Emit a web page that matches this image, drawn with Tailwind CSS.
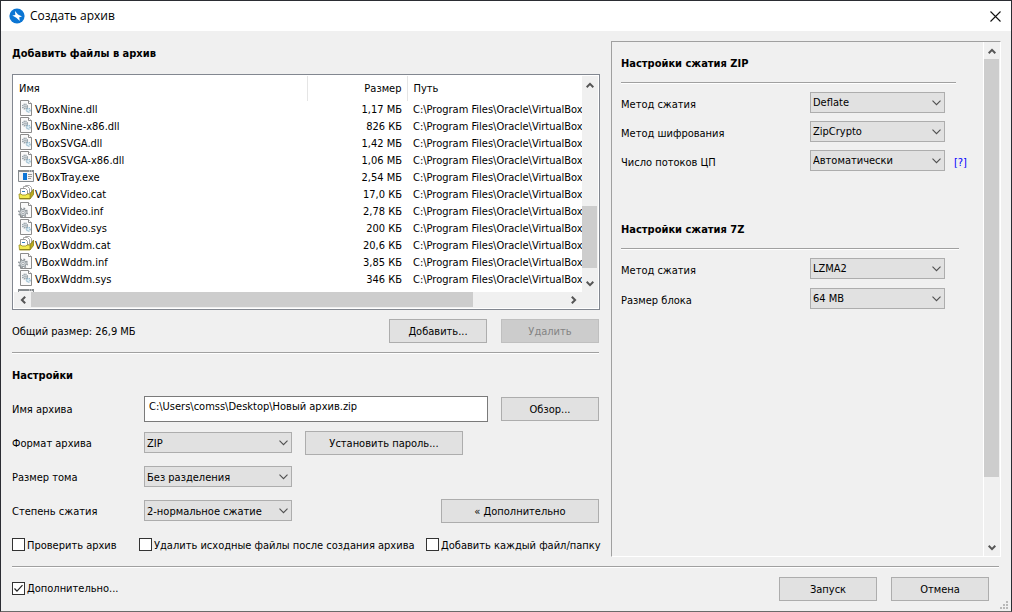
<!DOCTYPE html>
<html lang="ru">
<head>
<meta charset="utf-8">
<title>Создать архив</title>
<script src="https://cdn.jsdelivr.net/npm/@tailwindcss/browser@4"></script>
</head>
<body class="flex min-h-screen flex-col border border-[#2b2d33] border-b-[#6a6a6a] bg-[#f0f0f0] font-['DejaVu_Sans_Condensed','DejaVu_Sans',sans-serif] text-[11px] leading-4 text-black">

<svg class="hidden" xmlns="http://www.w3.org/2000/svg">
  <symbol id="dll" viewBox="0 0 16 16">
    <path d="M2.500.500h8l3 3v12h-11z" fill="#fafafa" stroke="#8c8c8c"/>
    <path d="M10.500.500v3h3" fill="#fff" stroke="#8c8c8c"/>
    <circle cx="7" cy="6.500" r="2.300" fill="#e4e9ec" stroke="#8d989f" stroke-width="1.600" stroke-dasharray="1 .7"/>
    <circle cx="7" cy="6.500" r=".9" fill="#a5adb2"/>
    <circle cx="10.300" cy="10.300" r="1.800" fill="#e2f1f8" stroke="#8fb5c9" stroke-width="1.400" stroke-dasharray="1 .6"/>
  </symbol>
  <symbol id="exe" viewBox="0 0 16 16">
    <path d="M.5 2.500h15v11H.5z" fill="#f3f3f3" stroke="#868b8e"/>
    <path d="M0 2h16v2H0z" fill="#868b8e"/>
    <path d="M11 2.500h1v1h-1zM13 2.500h1v1h-1z" fill="#e8e8e8"/>
    <path d="M5 5h4v7H5z" fill="#0a74d6"/>
    <path d="M10 6.500h4M10 8.500h4M10 10.500h3" stroke="#9a9a9a"/>
  </symbol>
  <symbol id="cat" viewBox="0 0 16 16">
    <path d="M7.500.500h4l2 2v5h-6z" fill="#fff" stroke="#a8a8a8"/>
    <path d="M5.500 1.500h4l2 2v5h-6z" fill="#fff" stroke="#a8a8a8"/>
    <path d="M2.500 3.500h5l2 2v5h-7z" fill="#fff" stroke="#999"/>
    <path d="M4 6.500h3" stroke="#3b83bd"/>
    <path d="M12 9l3.500-5v5.500L12 14z" fill="#b9ab1c" stroke="#857b1a" stroke-width=".8"/>
    <path d="M1 9h2l1 1h4l1-1h3v5H1.500z" fill="#f2ea4e" stroke="#a1972a" stroke-width=".9"/>
    <path d="M2 13.500h10" stroke="#8d8420"/>
  </symbol>
  <symbol id="inf" viewBox="0 0 16 16">
    <path d="M2.500.500h8l3 3v12h-11z" fill="#fafafa" stroke="#8c8c8c"/>
    <path d="M10.500.500v3h3" fill="#fff" stroke="#8c8c8c"/>
    <circle cx="5" cy="10.500" r="4.200" fill="none" stroke="#8d9499" stroke-width="1.600" stroke-dasharray="1.700 1.600"/>
    <circle cx="5" cy="10.500" r="3.200" fill="#d3d8db" stroke="#949b9f"/>
    <circle cx="5" cy="10.500" r="1.200" fill="#fff" stroke="#949b9f" stroke-width=".8"/>
  </symbol>
  <symbol id="chev" viewBox="0 0 9 6"><path d="M.5.700l4 4 4-4" fill="none" stroke="#4f4f4f" stroke-width="1.100"/></symbol>
  <symbol id="up" viewBox="0 0 8 6"><path d="M.7 5.200L4 1.900l3.300 3.300" fill="none" stroke="#555" stroke-width="2"/></symbol>
  <symbol id="down" viewBox="0 0 8 6"><path d="M.7.800L4 4.100 7.300.800" fill="none" stroke="#555" stroke-width="2"/></symbol>
  <symbol id="left" viewBox="0 0 6 8"><path d="M5.200.700L1.900 4l3.300 3.300" fill="none" stroke="#555" stroke-width="2"/></symbol>
  <symbol id="right" viewBox="0 0 6 8"><path d="M.8.700L4.100 4 .8 7.300" fill="none" stroke="#555" stroke-width="2"/></symbol>
</svg>

<header class="flex h-[30px] items-center gap-[5px] bg-white pr-2.5 pl-2 font-['Open_Sans',sans-serif] text-xs">
  <svg class="size-4" viewBox="0 0 16 16"><circle cx="8" cy="8" r="7.600" fill="#0b75d3"/><path d="M6 3L9 6.500 13 8.500 10.200 9.200l.6 3.800L7.300 9.800 3.300 7.600l3-.7z" fill="#fff"/></svg>
  <h1 class="flex-1">Создать архив</h1>
  <button type="button" aria-label="Закрыть"><svg class="size-[11px]" viewBox="0 0 11 11"><path d="M.5.500l10 10M10.500.500l-10 10" stroke="#111" stroke-width="1.100"/></svg></button>
</header>

<main class="grid flex-1 grid-cols-[minmax(0,588fr)_minmax(0,390fr)] gap-[11px] pt-2.5 pr-2.5 pl-[11px]">
  <div class="flex flex-col">
    <h2 class="mt-[5px] font-bold">Добавить файлы в архив</h2>

    <div class="mt-3 grid grid-cols-[minmax(0,1fr)_16px] grid-rows-[216px_16px] border border-[#828790] bg-white p-px">
      <div class="overflow-hidden">
        <table class="w-full table-fixed border-collapse whitespace-nowrap [&_td]:h-[17px] [&_td]:p-0 [&_td]:align-bottom [&_td_svg]:-mt-px [&_th]:h-[25px] [&_th]:p-0 [&_th]:font-normal [&_td:nth-child(1)]:pl-1 [&_td:nth-child(2)]:pr-[5px] [&_td:nth-child(2)]:text-right [&_td:nth-child(3)]:pl-1.5">
          <colgroup><col><col class="w-[100px]"><col class="w-[175px]"></colgroup>
          <thead><tr>
            <th class="border-r border-[#e5e5e5] text-left"><span class="pl-[5px]">Имя</span></th>
            <th class="border-r border-[#e5e5e5] text-right"><span class="pr-[5px]">Размер</span></th>
            <th class="text-left"><span class="pl-1.5">Путь</span></th>
          </tr></thead>
          <tbody>
            <tr><td><div class="flex h-[17px] items-end gap-px"><svg class="size-4 self-start"><use href="#dll"/></svg>VBoxNine.dll</div></td><td>1,17 МБ</td><td>C:\Program Files\Oracle\VirtualBox</td></tr>
            <tr><td><div class="flex h-[17px] items-end gap-px"><svg class="size-4 self-start"><use href="#dll"/></svg>VBoxNine-x86.dll</div></td><td>826 КБ</td><td>C:\Program Files\Oracle\VirtualBox</td></tr>
            <tr><td><div class="flex h-[17px] items-end gap-px"><svg class="size-4 self-start"><use href="#dll"/></svg>VBoxSVGA.dll</div></td><td>1,42 МБ</td><td>C:\Program Files\Oracle\VirtualBox</td></tr>
            <tr><td><div class="flex h-[17px] items-end gap-px"><svg class="size-4 self-start"><use href="#dll"/></svg>VBoxSVGA-x86.dll</div></td><td>1,06 МБ</td><td>C:\Program Files\Oracle\VirtualBox</td></tr>
            <tr><td><div class="flex h-[17px] items-end gap-px"><svg class="size-4 self-start"><use href="#exe"/></svg>VBoxTray.exe</div></td><td>2,54 МБ</td><td>C:\Program Files\Oracle\VirtualBox</td></tr>
            <tr><td><div class="flex h-[17px] items-end gap-px"><svg class="size-4 self-start"><use href="#cat"/></svg>VBoxVideo.cat</div></td><td>17,0 КБ</td><td>C:\Program Files\Oracle\VirtualBox</td></tr>
            <tr><td><div class="flex h-[17px] items-end gap-px"><svg class="size-4 self-start"><use href="#inf"/></svg>VBoxVideo.inf</div></td><td>2,78 КБ</td><td>C:\Program Files\Oracle\VirtualBox</td></tr>
            <tr><td><div class="flex h-[17px] items-end gap-px"><svg class="size-4 self-start"><use href="#dll"/></svg>VBoxVideo.sys</div></td><td>200 КБ</td><td>C:\Program Files\Oracle\VirtualBox</td></tr>
            <tr><td><div class="flex h-[17px] items-end gap-px"><svg class="size-4 self-start"><use href="#cat"/></svg>VBoxWddm.cat</div></td><td>20,6 КБ</td><td>C:\Program Files\Oracle\VirtualBox</td></tr>
            <tr><td><div class="flex h-[17px] items-end gap-px"><svg class="size-4 self-start"><use href="#inf"/></svg>VBoxWddm.inf</div></td><td>3,85 КБ</td><td>C:\Program Files\Oracle\VirtualBox</td></tr>
            <tr><td><div class="flex h-[17px] items-end gap-px"><svg class="size-4 self-start"><use href="#dll"/></svg>VBoxWddm.sys</div></td><td>346 КБ</td><td>C:\Program Files\Oracle\VirtualBox</td></tr>
            <tr><td><div class="flex h-[17px]"><svg class="size-4"><use href="#exe"/></svg></div></td><td></td><td></td></tr>
          </tbody>
        </table>
      </div>
      <div class="flex flex-col items-center bg-[#f0f0f0]">
        <div class="flex h-[17px] items-center"><svg class="h-1.5 w-2"><use href="#up"/></svg></div>
        <div class="flex w-full flex-1 flex-col pr-px"><div class="flex-[113]"></div><div class="flex-[62] bg-[#cdcdcd]"></div><div class="flex-[7]"></div></div>
        <div class="flex h-[17px] items-center"><svg class="h-1.5 w-2"><use href="#down"/></svg></div>
      </div>
      <div class="flex items-center bg-[#f0f0f0]">
        <div class="flex w-[17px] justify-center"><svg class="h-2 w-1.5"><use href="#left"/></svg></div>
        <div class="flex h-full flex-1 pb-px"><div class="flex-[442] bg-[#cdcdcd]"></div><div class="flex-[92]"></div></div>
        <div class="flex w-[17px] justify-center"><svg class="h-2 w-1.5"><use href="#right"/></svg></div>
      </div>
      <div class="bg-[#f0f0f0]"></div>
    </div>

    <div class="mt-[9px] mr-px flex h-6 items-center gap-3.5">
      <p class="flex-1 pt-0.5">Общий размер: 26,9 МБ</p>
      <button type="button" class="h-6 w-[98px] border border-[#adadad] bg-[#e1e1e1] pt-0.5">Добавить...</button>
      <button type="button" disabled class="h-6 w-[98px] border border-[#bfbfbf] bg-[#cccccc] pt-0.5 text-[#838383]">Удалить</button>
    </div>
    <hr class="mt-[9px] mr-px h-0.5 border-t border-b border-t-[#a0a0a0] border-b-white">

    <h2 class="mt-3.5 font-bold">Настройки</h2>

    <div class="mt-2 mr-px grid auto-rows-[34px] grid-cols-[132px_minmax(0,1fr)] items-center">
      <label for="name" class="pt-0.5">Имя архива</label>
      <div class="flex items-center gap-[13px]">
        <input id="name" type="text" value="C:\Users\comss\Desktop\Новый архив.zip" class="h-[26px] min-w-0 flex-1 border border-[#7a7a7a] bg-white pb-1.5 pl-1">
        <button type="button" class="h-6 w-[98px] border border-[#adadad] bg-[#e1e1e1] pt-0.5">Обзор...</button>
      </div>
      <label for="format" class="pt-0.5">Формат архива</label>
      <div class="flex items-center gap-[13px]">
        <div class="relative mb-px w-[148px]"><select id="format" class="block h-[21px] w-full appearance-none border border-[#adadad] bg-[#e1e1e1] pt-[3px] pl-0.5"><option>ZIP</option></select><svg class="pointer-events-none absolute top-2 right-1 h-1.5 w-[9px]"><use href="#chev"/></svg></div>
        <button type="button" class="h-6 w-[158px] border border-[#adadad] bg-[#e1e1e1] pt-0.5">Установить пароль...</button>
      </div>
      <label for="volume" class="pt-0.5">Размер тома</label>
      <div class="relative mb-px w-[148px]"><select id="volume" class="block h-[21px] w-full appearance-none border border-[#adadad] bg-[#e1e1e1] pt-[3px] pl-0.5"><option>Без разделения</option></select><svg class="pointer-events-none absolute top-2 right-1 h-1.5 w-[9px]"><use href="#chev"/></svg></div>
      <label for="level" class="pt-0.5">Степень сжатия</label>
      <div class="flex items-center justify-between">
        <div class="relative mb-px w-[148px]"><select id="level" class="block h-[21px] w-full appearance-none border border-[#adadad] bg-[#e1e1e1] pt-[3px] pl-0.5"><option>2-нормальное сжатие</option></select><svg class="pointer-events-none absolute top-2 right-1 h-1.5 w-[9px]"><use href="#chev"/></svg></div>
        <button type="button" class="h-6 w-[158px] border border-[#adadad] bg-[#e1e1e1] pt-0.5">« Дополнительно</button>
      </div>
    </div>

    <div class="mt-2 grid grid-cols-[127px_minmax(0,1fr)_174px] leading-5 whitespace-nowrap">
      <label class="flex items-start gap-0.5"><input type="checkbox" class="mt-0.5 size-[13px] shrink-0 appearance-none border border-[#333] bg-white">Проверить архив</label>
      <label class="flex items-start gap-0.5"><input type="checkbox" class="mt-0.5 size-[13px] shrink-0 appearance-none border border-[#333] bg-white">Удалить исходные файлы после создания архива</label>
      <label class="flex items-start gap-0.5"><input type="checkbox" class="mt-0.5 size-[13px] shrink-0 appearance-none border border-[#333] bg-white">Добавить каждый файл/папку</label>
    </div>
  </div>

  <section class="grid grid-cols-[minmax(0,1fr)_17px] border border-t-[#a0a0a0] border-r-white border-b-white border-l-[#a0a0a0]">
    <div class="pt-3.5 pr-6 pl-[9px]">
      <h2 class="font-bold">Настройки сжатия ZIP</h2>
      <hr class="mt-2.5 mr-[3px] h-0.5 border-t border-b border-t-[#a0a0a0] border-b-white">
      <div class="mt-2 grid grid-cols-[189px_135px_1fr] items-center gap-y-2">
        <label for="zm" class="pt-1">Метод сжатия</label>
        <div class="relative"><select id="zm" class="block h-[21px] w-full appearance-none border border-[#adadad] bg-[#e1e1e1] pt-px pl-0.5"><option>Deflate</option></select><svg class="pointer-events-none absolute top-2 right-1 h-1.5 w-[9px]"><use href="#chev"/></svg></div>
        <span></span>
        <label for="ze" class="pt-1">Метод шифрования</label>
        <div class="relative"><select id="ze" class="block h-[21px] w-full appearance-none border border-[#adadad] bg-[#e1e1e1] pt-px pl-0.5"><option>ZipCrypto</option></select><svg class="pointer-events-none absolute top-2 right-1 h-1.5 w-[9px]"><use href="#chev"/></svg></div>
        <span></span>
        <label for="zt" class="pt-1">Число потоков ЦП</label>
        <div class="relative"><select id="zt" class="block h-[21px] w-full appearance-none border border-[#adadad] bg-[#e1e1e1] pt-px pl-0.5"><option>Автоматически</option></select><svg class="pointer-events-none absolute top-2 right-1 h-1.5 w-[9px]"><use href="#chev"/></svg></div>
        <a href="#" class="pt-1 pl-[9px] text-[#0000ff]">[?]</a>
      </div>
      <h2 class="mt-[51px] font-bold">Настройки сжатия 7Z</h2>
      <hr class="mt-2.5 h-0.5 border-t border-b border-t-[#a0a0a0] border-b-white">
      <div class="mt-2 grid grid-cols-[189px_135px] items-center gap-y-[9px]">
        <label for="sm" class="pt-1">Метод сжатия</label>
        <div class="relative"><select id="sm" class="block h-[21px] w-full appearance-none border border-[#adadad] bg-[#e1e1e1] pt-px pl-0.5"><option>LZMA2</option></select><svg class="pointer-events-none absolute top-2 right-1 h-1.5 w-[9px]"><use href="#chev"/></svg></div>
        <label for="sb" class="pt-1">Размер блока</label>
        <div class="relative"><select id="sb" class="block h-[21px] w-full appearance-none border border-[#adadad] bg-[#e1e1e1] pt-px pl-0.5"><option>64 MB</option></select><svg class="pointer-events-none absolute top-2 right-1 h-1.5 w-[9px]"><use href="#chev"/></svg></div>
      </div>
    </div>
    <div class="flex flex-col items-center border-l border-white">
      <div class="flex h-[17px] items-center"><svg class="h-1.5 w-2"><use href="#up"/></svg></div>
      <div class="flex w-full flex-1 flex-col pr-px"><div class="flex-[418] bg-[#cdcdcd]"></div><div class="flex-[62]"></div></div>
      <div class="flex h-[17px] items-center"><svg class="h-1.5 w-2"><use href="#down"/></svg></div>
    </div>
  </section>
</main>

<footer class="pt-[9px] pr-[3px] pb-0.5 pl-[11px]">
  <hr class="mr-[9px] h-0.5 border-t border-b border-t-[#a0a0a0] border-b-white">
  <div class="mt-[9px] flex">
    <div class="flex h-6 flex-1 items-center gap-3.5">
      <label class="flex flex-1 items-start gap-0.5 leading-[22px]"><span class="relative mt-1 flex"><input type="checkbox" checked class="size-[13px] appearance-none border border-[#333] bg-white"><svg class="pointer-events-none absolute inset-0 size-[13px]" viewBox="0 0 13 13"><path d="M2.500 6.500L5 9.200l5.500-6" fill="none" stroke="#222" stroke-width="1.200"/></svg></span>Дополнительно...</label>
      <button type="button" class="h-6 w-[98px] border border-[#adadad] bg-[#e1e1e1] pt-0.5">Запуск</button>
      <button type="button" class="h-6 w-[98px] border border-[#adadad] bg-[#e1e1e1] pt-0.5">Отмена</button>
    </div>
    <svg class="mt-6 ml-[11px] h-2 w-2" viewBox="0 0 8 8"><path d="M6 0h2v2H6zM3 3h2v2H3zM6 3h2v2H6zM0 6h2v2H0zM3 6h2v2H3zM6 6h2v2H6z" fill="#b8b8b8"/></svg>
  </div>
</footer>
</body>
</html>
